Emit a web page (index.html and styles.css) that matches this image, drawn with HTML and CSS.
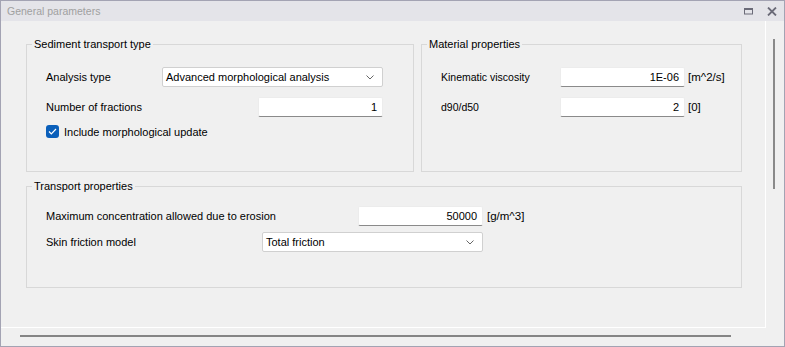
FILE: index.html
```html
<!DOCTYPE html>
<html lang="en">
<head>
  <meta charset="UTF-8" />
  <title>General parameters</title>
  <link rel="stylesheet" href="styles.css">
</head>
<body>

<div class="window">
  <div class="titlebar">
    <span class="title">General parameters</span>
    <span class="tb-btn">
      <svg width="10" height="7" viewBox="0 0 10 7"><rect x="0.5" y="1" width="8" height="5" fill="none" stroke="#6b6b78" stroke-width="1"/><rect x="0" y="0" width="9" height="2" fill="#6b6b78"/></svg>
    </span>
    <span class="tb-btn">
      <svg width="10" height="9" viewBox="0 0 10 9"><path d="M1 0.5 L9 8.5 M9 0.5 L1 8.5" stroke="#6b6b78" stroke-width="1.8"/></svg>
    </span>
  </div>

  <div class="frame">
    <div class="viewport">
      <div class="top-row">
        <fieldset class="group group-sediment">
          <legend>Sediment transport type</legend>
          <div class="grid grid-sediment">
            <label>Analysis type</label>
            <div class="select">Advanced morphological analysis<svg width="8" height="5" viewBox="0 0 8 5"><path d="M0.5 0.5 L4 4 L7.5 0.5" fill="none" stroke="#666" stroke-width="1"/></svg></div>

            <label>Number of fractions</label>
            <div class="box box-narrow">1</div>

            <div class="check-row">
              <span class="check">
                <svg width="9" height="7" viewBox="0 0 9 7"><path d="M1 3.5 L3.3 5.8 L8 1" fill="none" stroke="#fff" stroke-width="1.2"/></svg>
              </span>
              <span>Include morphological update</span>
            </div>
          </div>
        </fieldset>

        <fieldset class="group group-material">
          <legend>Material properties</legend>
          <div class="grid grid-material">
            <label>Kinematic viscosity</label>
            <div class="box">1E-06</div>
            <span class="unit">[m^2/s]</span>

            <label>d90/d50</label>
            <div class="box">2</div>
            <span class="unit">[0]</span>
          </div>
        </fieldset>
      </div>

      <fieldset class="group group-transport">
        <legend>Transport properties</legend>
        <div class="grid grid-transport">
          <label>Maximum concentration allowed due to erosion</label>
          <div class="box box-narrow">50000</div>
          <span class="unit">[g/m^3]</span>

          <label>Skin friction model</label>
          <div class="select">Total friction<svg width="8" height="5" viewBox="0 0 8 5"><path d="M0.5 0.5 L4 4 L7.5 0.5" fill="none" stroke="#666" stroke-width="1"/></svg></div>
          <span></span>
        </div>
      </fieldset>
    </div>

    <div class="vscroll"><div class="thumb-v"></div></div>
    <div class="hscroll"><div class="thumb-h"></div></div>
    <div class="corner"></div>
  </div>
</div>

</body>
</html>
```

FILE: styles.css
```css
* {
  box-sizing: border-box;
}
html, body {
  margin: 0;
  padding: 0;
  background: #f0f0f0;
}
body {
  font-family: "Liberation Sans", Arial, sans-serif;
  font-size: 11px;
  color: #000;
}
.window {
  width: 785px;
  height: 347px;
  border: 1px solid #a3a3b3;
  display: flex;
  flex-direction: column;
  background: #f0f0f0;
}
.titlebar {
  height: 20px;
  background: #e4e4e9;
  display: flex;
  align-items: center;
  padding-left: 6px;
  padding-right: 7px;
}
.title {
  color: #a0a0a0;
  font-size: 10.5px;
  flex: 1;
}
.tb-btn {
  display: flex;
  align-items: center;
  margin-left: 13px;
}
.frame {
  flex: 1;
  display: grid;
  grid-template-columns: 765px 1fr;
  grid-template-rows: 307px 1fr;
}
.viewport {
  border-right: 1px solid #fff;
  border-bottom: 1px solid #fff;
  padding: 15px 0 0 25px;
  overflow: hidden;
}
.vscroll {
  padding: 18px 0 0 7px;
}
.thumb-v {
  width: 2px;
  height: 150px;
  background: #8a8a8a;
}
.hscroll {
  padding: 7px 0 0 19px;
}
.thumb-h {
  width: 711px;
  height: 2px;
  background: #858585;
}
.top-row {
  display: flex;
  gap: 7px;
}
.group {
  margin: 0;
  padding: 0;
  border: 1px solid #d8d8d8;
  min-width: 0;
}
.group legend {
  margin-left: 5px;
  padding: 0 2px;
  line-height: 16px;
}
.group-sediment {
  width: 388px;
}
.group-material {
  width: 321px;
}
.group-transport {
  width: 716px;
  margin-top: 6px;
}
.grid {
  display: grid;
  align-items: center;
  white-space: nowrap;
}
.grid-sediment {
  grid-template-columns: 1fr 221px;
  row-gap: 10px;
  padding: 15px 30px 33px 19px;
}
.grid-material {
  grid-template-columns: 119px 125px auto;
  row-gap: 10px;
  padding: 15px 0 33px 19px;
}
.grid-transport {
  grid-template-columns: 216px 221px auto;
  row-gap: 6px;
  padding: 12px 0 35px 19px;
}
.select {
  height: 20px;
  background: #fff;
  border: 1px solid #d0d0d0;
  border-radius: 2px;
  display: flex;
  align-items: center;
  justify-content: space-between;
  padding: 0 8px 0 3px;
}
.box {
  height: 20px;
  background: #fff;
  border: 1px solid #ececec;
  border-bottom-color: #8a8a8a;
  border-radius: 2px;
  text-align: right;
  padding: 0 5px;
  line-height: 18px;
}
.box-narrow {
  width: 125px;
  justify-self: end;
}
.unit {
  font-size: 11.5px;
  margin-left: 3px;
}
.grid-transport .unit {
  margin-left: 4px;
}
.grid-material label {
  font-size: 10.5px;
}
.check-row {
  grid-column: 1 / 3;
  display: flex;
  align-items: center;
  gap: 5px;
  margin-top: -2px;
}
.check {
  width: 13px;
  height: 13px;
  border-radius: 3px;
  background: #0a5fba;
  display: flex;
  align-items: center;
  justify-content: center;
}
```
